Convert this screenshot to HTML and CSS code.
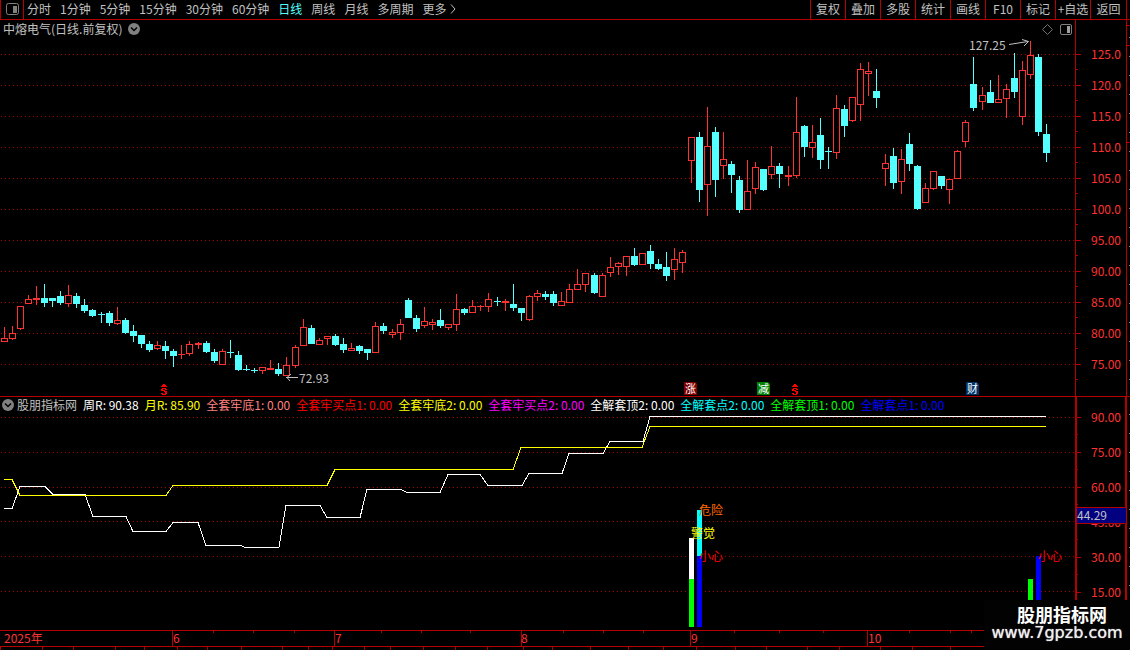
FILE: index.html
```html
<!DOCTYPE html>
<html lang="zh-CN">
<head>
<meta charset="utf-8">
<title>中熔电气 日线</title>
<link rel="stylesheet" href="styles.css">
</head>
<body>
<div class="app">
  <header class="toolbar">
    <button class="layout-btn" type="button" aria-label="布局">
      <svg width="13" height="12" viewBox="0 0 13 12"><rect x="0.5" y="0.5" width="12" height="11" rx="2" fill="none" stroke="#808080"/><rect x="7" y="3" width="4" height="7" fill="#808080"/></svg>
    </button>
    <nav class="periods">
      <button type="button">分时</button>
      <button type="button">1分钟</button>
      <button type="button">5分钟</button>
      <button type="button">15分钟</button>
      <button type="button">30分钟</button>
      <button type="button">60分钟</button>
      <button type="button" class="active">日线</button>
      <button type="button">周线</button>
      <button type="button">月线</button>
      <button type="button">多周期</button>
      <button type="button" class="more">更多<svg width="6" height="10" viewBox="0 0 6 10"><path d="M1 0.5L5 5L1 9.5" fill="none" stroke="#c0c0c0"/></svg></button>
    </nav>
    <div class="tools">
      <button type="button">复权</button>
      <button type="button">叠加</button>
      <button type="button">多股</button>
      <button type="button">统计</button>
      <button type="button">画线</button>
      <button type="button">F10</button>
      <button type="button">标记</button>
      <button type="button">+自选</button>
      <button type="button">返回</button>
    </div>
  </header>

  <main class="workspace">
    <section class="panel price">
      <div class="plot">
        <div class="title">
          <h1>中熔电气(日线.前复权)</h1>
          <svg width="12" height="12" viewBox="0 0 12 12"><circle cx="6" cy="6" r="6" fill="#808080"/><path d="M3 4.5L6 7.5L9 4.5" fill="none" stroke="#000" stroke-width="1.5"/></svg>
          <div class="title-icons">
            <svg width="11" height="11" viewBox="0 0 11 11"><path d="M5.5 0.5L10.5 5.5L5.5 10.5L0.5 5.5Z" fill="none" stroke="#707070"/></svg>
            <svg width="12" height="11" viewBox="0 0 12 11"><rect x="0.5" y="0.5" width="11" height="10" rx="1.5" fill="none" stroke="#808080"/><rect x="7" y="2" width="3" height="7" fill="#a0a0a0"/></svg>
          </div>
        </div>
        <svg class="canvas price-canvas">
          <defs>
            <path id="dividend" d="M2 0h2v1h-2zM1 1h4v1h-4zM0 2h6v1h-6zM1 4h4v1h-4zM0 5h2v2h-2zM4 5h2v1h-2zM1 6h3v1h-3zM3 7h3v1h-3zM4 8h2v2h-2zM0 9h2v1h-2zM1 10h4v1h-4z"/>
          </defs>
          <g id="price-grid" shape-rendering="crispEdges"></g>
          <g transform="translate(0 -39)">
            <g id="candles" shape-rendering="crispEdges"></g>
            <text class="note" x="969" y="50">127.25</text>
            <path class="pointer" d="M1009 44.5L1028 41.5M1022 39.5L1028.5 41.5L1024 46"/>
            <path class="pointer" d="M286 377.5H298M291 374L287 377.5L290 381"/>
            <text class="note" x="299" y="383">72.93</text>
            <g class="tag">
              <path fill="#800000" d="M684 382h11l2 2v11h-13z"/><text x="685" y="393">涨</text>
              <path fill="#008000" d="M757 382h11l2 2v11h-13z"/><text x="758" y="393">减</text>
              <path fill="#003468" d="M966 382h11l2 2v11h-13z"/><text x="967" y="393">财</text>
            </g>
            <g fill="#f00" shape-rendering="crispEdges">
              <use href="#dividend" x="161" y="384"/>
              <use href="#dividend" x="792" y="384"/>
            </g>
          </g>
        </svg>
      </div>
      <ol class="axis">
        <li>125.0</li><li>120.0</li><li>115.0</li><li>110.0</li><li>105.0</li><li>100.0</li>
        <li>95.00</li><li>90.00</li><li>85.00</li><li>80.00</li><li>75.00</li>
      </ol>
      <div class="edge"></div>
    </section>

    <section class="panel indicator">
      <div class="plot">
        <div class="legend">
          <span class="silver source"><svg width="12" height="12" viewBox="0 0 12 12"><circle cx="6" cy="6" r="6" fill="#808080"/><path d="M3 4.5L6 7.5L9 4.5" fill="none" stroke="#000" stroke-width="1.5"/></svg>股朋指标网</span>
          <span class="white">周R: 90.38</span>
          <span class="yellow">月R: 85.90</span>
          <span class="pink">全套牢底1: 0.00</span>
          <span class="red">全套牢买点1: 0.00</span>
          <span class="yellow">全套牢底2: 0.00</span>
          <span class="magenta">全套牢买点2: 0.00</span>
          <span class="white">全解套顶2: 0.00</span>
          <span class="cyan">全解套点2: 0.00</span>
          <span class="green">全解套顶1: 0.00</span>
          <span class="blue">全解套点1: 0.00</span>
        </div>
        <svg class="canvas indicator-canvas">
          <g id="indicator-grid" shape-rendering="crispEdges"></g>
          <g transform="translate(0 -414)">
            <g shape-rendering="crispEdges">
              <polyline class="line-week" points="4,508.500 12,508.500 20,486.500 45,486.500 53,494.500 85,494.500 93,516.500 126,516.500 133,531.500 166,531.500 173,522.500 198,522.500 206,545.500 241,545.500 245,547.500 279,547.500 286,505.500 320,505.500 327,517.500 360,517.500 367,489.500 401,489.500 407,492.500 440,492.500 448,474.500 480,474.500 488,485.500 522,485.500 529,473.500 562,473.500 569,453.500 603,453.500 610,441.500 643,441.500 650,416.500 1046,416.500"/>
              <polyline class="line-month" points="4,479.500 12,479.500 20,495.500 166,495.500 173,485.500 327,485.500 335,469.500 513,469.500 521,447.500 642,447.500 650,426.500 1046,426.500"/>
              <rect x="689" y="538" width="5" height="41" fill="#fff"/>
              <rect x="689" y="579" width="5" height="48" fill="#0f0"/>
              <rect x="697" y="510" width="5" height="46" fill="#0ff"/>
              <rect x="697" y="556" width="5" height="71" fill="#00f"/>
              <rect x="1028" y="579" width="5" height="48" fill="#0f0"/>
              <rect x="1036" y="556" width="5" height="71" fill="#00f"/>
            </g>
            <text x="699" y="515" fill="#ff6a00">危险</text>
            <text x="691" y="538" fill="#ff0">警觉</text>
            <text x="699" y="561" fill="#f00">小心</text>
            <text x="1038" y="561" fill="#f00">小心</text>
          </g>
        </svg>
      </div>
      <div class="axis-wrap">
        <ol class="axis">
          <li>90.00</li><li>75.00</li><li>60.00</li><li>45.00</li><li>30.00</li><li>15.00</li>
        </ol>
        <output class="cursor-value">44.29</output>
      </div>
      <div class="edge"></div>
    </section>
  </main>

  <footer class="dates">
    <svg class="canvas date-canvas"><g id="date-ticks" shape-rendering="crispEdges"></g><g id="date-labels"></g></svg>
  </footer>

  <aside class="watermark">
    <strong>股朋指标网</strong>
    <span>www.7gpzb.com</span>
  </aside>
</div>
<script src="chart.js"></script>
</body>
</html>
```
FILE: styles.css
```css
* { box-sizing: border-box; }

body {
  margin: 0;
  background: #000;
  color: #c0c0c0;
  font: 12px/16px "Noto Sans CJK SC", sans-serif;
}

button {
  margin: 0;
  padding: 0;
  border: 0;
  background: none;
  color: inherit;
  font: inherit;
  white-space: nowrap;
}

.app {
  position: relative;
  display: flex;
  flex-direction: column;
  min-height: 100vh;
  overflow: hidden;
}

.toolbar {
  display: flex;
  height: 20px;
  padding-right: 3px;
  border-bottom: 1px solid #b40000;
}

.layout-btn {
  display: flex;
  align-items: center;
  justify-content: center;
  width: 24px;
  padding-bottom: 2px;
  border: solid #b40000;
  border-width: 0 1px;
}

.periods {
  display: flex;
  gap: 9px;
  padding-left: 3px;
}

.periods button,
.tools button {
  padding-bottom: 2px;
  line-height: 17px;
}

.periods .active { color: #54ffff; }

.more {
  display: flex;
  align-items: center;
  gap: 4px;
}

.tools {
  display: flex;
  margin-left: auto;
  border-right: 1px solid #b40000;
}

.tools button {
  width: 35px;
  border-left: 1px solid #b40000;
}

.tools button:last-child { width: 36px; }

.panel {
  display: grid;
  grid-template-columns: minmax(0, 1fr) 51px 4px;
  border-bottom: 1px solid #b40000;
}

.indicator { border-bottom: 0; }

.plot { min-width: 0; }

.canvas {
  display: block;
  width: 100%;
  font-size: 12px;
}

.price-canvas {
  height: 357px;
  overflow: visible;
}

.indicator-canvas { height: 216px; }
.date-canvas { height: 20px; }

.title {
  display: flex;
  align-items: center;
  gap: 6px;
  height: 19px;
  padding: 0 3px 1px;
}

.title h1 {
  margin: 0;
  font-size: 12px;
  font-weight: normal;
}

.title-icons {
  display: flex;
  gap: 7px;
  margin-left: auto;
}

.legend {
  display: flex;
  align-items: center;
  gap: 6px;
  height: 17px;
  padding: 0 0 2px 2px;
  white-space: nowrap;
}

.source {
  display: flex;
  align-items: center;
  gap: 3px;
}

.silver { color: #c0c0c0; }
.white { color: #fff; }
.yellow { color: #ff0; }
.pink { color: #ff8080; }
.red { color: #f00; }
.magenta { color: #f0f; }
.cyan { color: #0ff; }
.green { color: #0f0; }
.blue { color: #00f; }

.axis {
  margin: 0;
  padding: 19px 5px 0 0;
  border-left: 1px solid #b40000;
  color: #ff3232;
  list-style: none;
  text-align: right;
}

.axis li {
  height: 31px;
  line-height: 29px;
  background:
    linear-gradient(#b40000, #b40000) 0 15px / 5px 1px no-repeat,
    linear-gradient(#b40000, #b40000) 0 100% / 2px 1px no-repeat;
}

.axis-wrap {
  position: relative;
  border-left: 2px solid #b40000;
}

.axis-wrap .axis {
  padding-top: 3px;
  border-left: 0;
}

.axis-wrap li {
  height: 35px;
  line-height: 33px;
  background:
    linear-gradient(#b40000, #b40000) 0 17px / 4px 1px no-repeat,
    linear-gradient(#b40000, #b40000) 0 100% / 1px 1px no-repeat;
}

.cursor-value {
  position: absolute;
  top: 110px;
  left: 0;
  right: 0;
  height: 17px;
  border: solid #b40000;
  border-width: 1px 0;
  background: #000080;
  color: #c0c0c0;
  line-height: 13px;
}

.edge {
  border-left: 1px solid #b40000;
  background:
    linear-gradient(#b40000, #b40000) 0 5px / 4px 1px no-repeat,
    linear-gradient(#b40000, #b40000) 0 25px / 4px 1px no-repeat,
    linear-gradient(#b40000, #b40000) 0 122px / 4px 1px no-repeat,
    repeating-linear-gradient(transparent 0 17px, #808080 17px 18px, transparent 18px 19px) 2px 0 / 1px 100% no-repeat;
}

.indicator .edge {
  border-left-width: 2px;
  margin-left: -1px;
  background:
    repeating-linear-gradient(transparent 0 17px, #808080 17px 18px, transparent 18px 19px) 2px 0 / 1px 100% no-repeat;
}

.note { fill: #c0c0c0; }
.pointer { fill: none; stroke: #c0c0c0; }
.tag text { fill: #fff; font-size: 11px; }
.line-week { fill: none; stroke: #fff; }
.line-month { fill: none; stroke: #ff0; }
.grid-line { stroke: #a00000; stroke-dasharray: 1 3; }
.date-label { fill: #ff3232; }

.watermark {
  position: absolute;
  right: 0;
  bottom: 0;
  display: flex;
  flex-direction: column;
  align-items: center;
  width: 146px;
  height: 50px;
  padding-top: 4px;
  background: #020202;
  color: #fff;
}

.watermark strong {
  padding-left: 10px;
  font-size: 18px;
  line-height: 20px;
}

.watermark span {
  font: 16px/18px "DejaVu Sans", sans-serif;
  color: #eee;
  text-shadow: 0 0 1px #eee;
}
```
FILE: chart.js
```
const NS = "http://www.w3.org/2000/svg";
const RISE = "#ff3232";
const FALL = "#54ffff";
const LINE = "#b40000";

function add(parent, name, attrs, text) {
  const node = document.createElementNS(NS, name);
  for (const key in attrs) node.setAttribute(key, attrs[key]);
  if (text) node.textContent = text;
  parent.appendChild(node);
}

// Each entry: wick top, body top, body bottom, wick bottom, r = rising / c = falling
const candles = `327,338,342,342,r 326,333,339,340,r 306,306,329,330,r 295,299,304,304,r 286,298,300,305,r 284,298,303,307,c
298,298,301,307,c 291,296,303,305,c 285,295,304,307,r 293,296,304,308,c 299,305,311,313,c 309,310,316,317,c
312,314,315,323,c 311,313,323,326,c 307,320,324,325,r 318,320,333,334,c 325,331,336,342,c 335,335,344,348,c
341,344,350,352,c 341,345,349,350,r 341,346,351,359,c 349,351,356,367,c 345,354,355,359,r 341,344,354,356,r
342,343,345,349,r 341,343,352,353,c 349,352,361,363,c 349,351,365,365,r 340,352,353,358,c 351,355,370,371,c
365,369,370,371,c 368,370,371,373,c 367,367,371,374,r 360,368,370,370,r 363,369,374,376,c 357,365,376,376,r
345,347,366,368,r 319,327,346,346,r 325,328,344,344,c 338,340,345,345,r 336,336,339,345,r 334,336,345,346,c
338,344,350,353,c 343,348,351,351,r 345,346,351,354,c 349,349,353,360,c 322,326,353,353,r 323,326,331,334,c
329,332,335,338,r 319,324,333,340,r 298,300,318,318,c 315,318,329,332,c 307,321,326,328,r 319,322,325,330,r
309,320,326,328,c 324,324,328,330,r 294,309,325,331,r 308,309,313,315,c 300,306,313,313,r 305,306,307,311,r
293,299,307,312,r 297,301,302,306,c 299,301,303,311,r 284,304,308,311,c 308,308,313,321,c 295,296,320,321,r
290,293,297,301,r 291,294,297,300,c 291,294,303,306,c 292,301,306,306,r 284,289,303,303,r 269,284,290,290,r
273,273,285,292,r 273,275,293,294,c 273,275,297,297,r 257,267,273,277,r 262,263,267,275,r 256,256,267,276,r
248,256,265,266,c 253,253,265,265,r 245,251,264,269,c 259,264,269,270,c 252,267,276,281,c 248,259,270,280,r
250,252,263,273,r 137,137,161,183,r 132,137,190,202,c 107,146,185,216,r 127,132,180,197,c 132,159,166,179,r
161,164,175,193,c 176,180,210,213,c 160,191,210,210,r 162,167,189,194,r 169,169,190,191,c 146,166,175,179,r
163,166,174,188,c 166,175,177,186,r 97,132,176,178,r 125,126,147,157,c 125,142,148,158,r 118,135,160,169,c
147,151,152,169,c 95,108,153,159,r 105,109,126,137,c 97,97,121,122,r 63,69,105,121,r 62,71,74,96,r
69,91,98,108,c 154,163,169,186,r 148,156,183,189,c 149,159,182,194,r 133,144,164,171,c 165,166,209,210,c
183,188,203,203,r 171,171,189,190,r 176,176,186,189,c 179,179,190,204,r 150,151,179,179,r 120,122,142,147,r
57,84,108,111,c 87,95,102,110,r 80,92,103,103,c 75,99,103,103,r 84,89,99,118,r 53,78,92,98,c
61,70,117,125,r 41,55,75,79,r 54,57,132,136,c 124,134,153,162,c`.split(/\s+/);

const candleLayer = document.getElementById("candles");
candles.forEach((entry, i) => {
  const parts = entry.split(",");
  const [high, top, bottom, low] = parts.map(Number);
  const color = parts[4] === "r" ? RISE : FALL;
  const x = 4 + 8 * i + Math.floor((i + 0.7) / 12.15);
  add(candleLayer, "rect", { x, y: high, width: 1, height: low - high, fill: color });
  add(candleLayer, "rect", { x: x - 3, y: top, width: 7, height: bottom - top, fill: color });
  if (parts[4] === "r" && bottom - top > 2) {
    add(candleLayer, "rect", { x: x - 2, y: top + 1, width: 5, height: bottom - top - 2, fill: "#000" });
  }
});

function grid(id, rows) {
  const layer = document.getElementById(id);
  rows.forEach(y => add(layer, "line", { class: "grid-line", x1: 1, x2: "100%", y1: y + 0.5, y2: y + 0.5 }));
}
grid("price-grid", [15, 46, 77, 108, 139, 170, 201, 232, 263, 294, 325]);
grid("indicator-grid", [3, 38, 73, 107, 142, 177]);

const ticks = document.getElementById("date-ticks");
const rect = (x, y, width, height) => add(ticks, "rect", { x, y, width, height, fill: LINE });
rect(0, 0, "100%", 1);
rect(0, 16, "100%", 1);
[172, 334, 521, 690, 867].forEach(x => rect(x, 0, 1, 16));
[213, 253, 294, 381, 421, 470, 563, 603, 643, 734, 779, 823, 909, 950, 971].forEach(x => rect(x, 1, 1, 2));
[0, 42, 73, 115, 144, 177, 207, 241, 282, 308, 332, 364, 390, 423, 455, 487, 523, 552, 590, 628,
  663, 696, 735, 766, 807, 839, 880, 912, 950].forEach(x => rect(x, 17, 1, 3));

const labels = document.getElementById("date-labels");
[[4, "2025年"], [173, "6"], [335, "7"], [521, "8"], [691, "9"], [868, "10"]]
  .forEach(([x, text]) => add(labels, "text", { class: "date-label", x, y: 13 }, text));
```
